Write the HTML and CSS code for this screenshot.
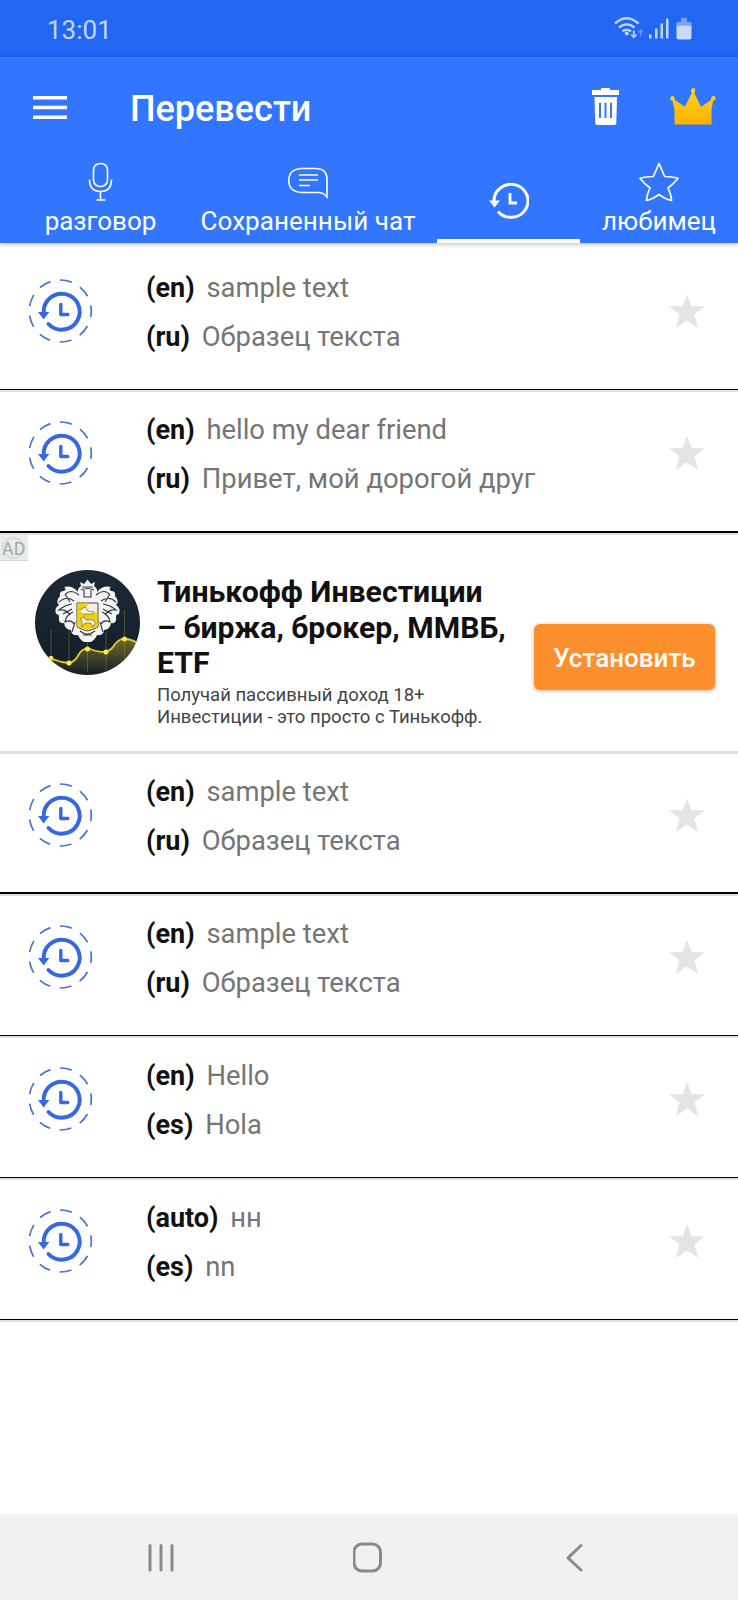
FILE: index.html
```html
<!DOCTYPE html>
<html lang="ru">
<head>
<meta charset="utf-8">
<title>Перевести</title>
<link rel="stylesheet" href="styles.css">
</head>
<body>
<svg class="defs" aria-hidden="true">
  <symbol id="history" viewBox="0 0 70 70">
    <circle cx="35.300" cy="35" r="31" fill="none" stroke="#4a74cc" stroke-width="1.700" stroke-dasharray="12 9.640" stroke-dashoffset="6"/>
    <path d="M18.700 37A18 18 0 1 1 23.500 48" fill="none" stroke="#3568e4" stroke-width="4" stroke-linecap="round"/>
    <path d="M13 36h11.300l-5.600 7.500z" fill="#3568e4"/>
    <path d="M35.800 28.500v10h7" fill="none" stroke="#3568e4" stroke-width="3.400" stroke-linecap="round" stroke-linejoin="round"/>
  </symbol>
  <symbol id="star" viewBox="0 0 36 36">
    <path d="M18 1l4.400 12.300H36L25.600 21.200 29 35 18 27.600 7 35l3.400-13.800L0 13.300h13.600z" fill="#e4e4e4"/>
  </symbol>
</svg>

<div class="status">
  <span class="clock">13:01</span>
  <svg class="status-icons" viewBox="0 0 80 26" width="80" height="26">
    <g fill="none" stroke="#c2d6fb" stroke-width="2.400">
      <path d="M1 7.500q11.500-10.500 23.500 0M5 11.500q7.800-6.500 15.500 0M8.500 15.500q4.300-3.500 8.500 0"/>
      <path d="M19.800 14.500v6.500M17 18.500l2.800 2.800 2.800-2.800" stroke-width="1.700"/>
      <path d="M26.500 20.500v-6M24 16.500l2.500-2.500 2.500 2.500" stroke-width="1.400" opacity=".45"/>
    </g>
    <circle cx="12.700" cy="17.500" r="2" fill="#c2d6fb"/>
    <path d="M35 18.500h2.500v4H35zM41 12.500h2.500v10H41zM46.500 7.500H49v15h-2.500zM52 2.500h2.500v20H52z" fill="#c2d6fb"/>
    <path d="M67 2h6v4h4.500v3.500h-15V6H67z" fill="#7ba1f8"/>
    <path d="M62.500 9.500h15v12q0 2-2 2h-11q-2 0-2-2z" fill="#c8d9fc"/>
  </svg>
</div>

<header class="header">
  <div class="toolbar">
    <svg class="menu" viewBox="0 0 34 23" width="34" height="23"><path d="M0 0h34v3.500H0zM0 9.700h34v3.600H0zM0 19.500h34v3.500H0z" fill="#fff"/></svg>
    <h1 class="title">Перевести</h1>
    <svg class="trash" viewBox="0 0 27 37" width="27" height="37"><path d="M9 0h9v2h9v5H0V2h9zM2.500 9h22.500l-.7 26q0 2-2 2H5.200q-2 0-2-2zM7 14.800v15.200h2V14.800zM12.500 14.800v15.200h2V14.800zM18 14.800v15.200h2V14.800z" fill="#fff" fill-rule="evenodd"/></svg>
    <svg class="crown" viewBox="0 0 46 37" width="46" height="37">
      <defs><linearGradient id="gold" x2="0" y2="1"><stop stop-color="#ffd51a"/><stop offset="1" stop-color="#ffb000"/></linearGradient></defs>
      <path d="M4.500 36.500V22L2.600 13Q0 12.500.2 10.200.5 8 2.700 8 5 8.500 4.800 12L14.800 18.700 21.800 5Q20.500 3.700 21 1.700 22 0 23.300 0q2 .3 2 2.500 0 1.500-1 2.500L31 18.700 41 12q-.2-3.500 2-4Q45.500 8 45.700 10.200 45.600 12.700 43 13L41.500 22V36.500z" fill="url(#gold)"/>
    </svg>
  </div>
  <nav class="tabs">
    <div class="tab talk">
      <svg class="tab-icon" viewBox="0 0 40 40" width="40" height="40" fill="none" stroke="#fff" stroke-width="1.600"><rect x="12.500" y="1.500" width="14" height="23" rx="6.500"/><path d="M8.500 17.500q0 12 11 12t11-12M19.500 29.500v8.500M15.500 38h9"/></svg>
      <span>разговор</span>
    </div>
    <div class="tab chat">
      <svg class="tab-icon" viewBox="0 0 40 40" width="40" height="40" fill="none" stroke="#fff" stroke-width="1.600"><path d="M13 6.500H27Q39 6.500 39 17V35Q35.500 30.500 30 30.500H13Q.7 29.500.7 18.500T13 6.500z"/><path d="M11 13h19M11 18h19M11 23.500h11"/></svg>
      <span>Сохраненный чат</span>
    </div>
    <div class="tab recent active">
      <svg viewBox="0 0 40 36" width="40" height="36"><path d="M5 18.500A17 16.500 0 1 1 9 28.500" fill="none" stroke="#fff" stroke-width="3"/><path d="M0 17.500h11l-5.500 7z" fill="#fff"/><path d="M21 10v10h7" fill="none" stroke="#fff" stroke-width="2.800"/></svg>
    </div>
    <div class="tab fav">
      <svg class="tab-icon" viewBox="0 0 40 40" width="40" height="40" fill="none" stroke="#fff" stroke-width="1.700" stroke-linejoin="round"><path d="M20 1.500Q24.500 12 25.700 14.500 36 15 39 16.500 34 22.500 29 26 32.500 34 32.500 38.500 27 37.500 20 32.500 13 37.500 7.500 38.500 7.500 34 11 26 6 22.500 1 16.500 4 15 14.300 14.500 15.500 12 20 1.500z"/></svg>
      <span>любимец</span>
    </div>
  </nav>
</header>

<main class="list">
  <article class="row">
    <svg class="history"><use href="#history"/></svg>
    <div class="lines"><p><b>(en)</b> sample text</p><p><b>(ru)</b> Образец текста</p></div>
    <svg class="star"><use href="#star"/></svg>
  </article>
  <article class="row thick before-ad">
    <svg class="history"><use href="#history"/></svg>
    <div class="lines"><p><b>(en)</b> hello my dear friend</p><p><b>(ru)</b> Привет, мой дорогой друг</p></div>
    <svg class="star"><use href="#star"/></svg>
  </article>
  <section class="ad">
    <span class="ad-mark">AD</span>
    <svg class="logo" viewBox="0 0 105 105" width="105" height="105">
      <defs>
        <clipPath id="disc"><circle cx="52.500" cy="52.500" r="52.500"/></clipPath>
        <linearGradient id="night" x2="0" y2="1"><stop stop-color="#1e2938"/><stop offset="1" stop-color="#141d27"/></linearGradient>
        <linearGradient id="glow" x2="0" y2="1"><stop stop-color="#8b8226" stop-opacity=".75"/><stop offset="1" stop-color="#8b8226" stop-opacity="0"/></linearGradient>
      </defs>
      <g clip-path="url(#disc)">
        <rect width="105" height="105" fill="url(#night)"/>
        <path d="M16 60v30M34 58v38M52.500 70v32M71 62v38M89.500 40v60" stroke="#4a4f38" stroke-width="1"/>
        <path d="M8 85Q14 90 19 89.500 26 92.500 34 93 40 92 44 84 48 78 54 78.500 64 83 71 81.500 77 80 80 74 86 67 92 69 99 70 105 75V105H8z" fill="url(#glow)"/>
        <path d="M8 85Q14 90 19 89.500 26 92.500 34 93 40 92 44 84 48 78 54 78.500 64 83 71 81.500 77 80 80 74 86 67 92 69 99 70 105 75" fill="none" stroke="#dcc92c" stroke-width="1.800"/>
        <g fill="#ffe84a"><circle cx="16" cy="88" r="2.300"/><circle cx="34" cy="93" r="2.500"/><circle cx="52.500" cy="79" r="2.500"/><circle cx="71" cy="82" r="2.500"/><circle cx="89.500" cy="69" r="2.500"/></g>
        <path d="M45 12l4 2 3.500-4.500L56 14l4-2-1 4q4 3 3 6 6-7 14-5-3 2 0 4 5 0 4 5 5 6 1 9 5 3 3 9-3 0-3 3 1 7-5 6-1 7-7 7 0 6-7 5-2 5-6 7H49q-4-2-6-7-7 1-7-5-6 0-7-7-6 1-5-6 0-3-3-3-2-6 3-9-4-3 1-9-1-5 4-5 3-2 0-4 8-2 14 5-1-3 3-6z" fill="#f3f3f1"/>
        <g fill="none" stroke="#303740" stroke-width="1.100"><path d="M47 17h11M46 20q7-3 13 0M49 20v7h7v-7M44 25q-9-7-14 0M61 25q9-7 14 0M39 31q-7-6-15 1M66 31q8-6 15 1M37 34q-7 1-13 6 7-1 11 5M68 34q7 1 13 6-7-1-11 5M38 42q-7 3-8 10 6-3 9 2M67 42q7 3 8 10-6-3-9 2M40 52l-3 10M65 52l3 10M45 61q7 6 15 0M48 65h9M30 24l5 8M75 24l-5 8M28 44l9-5M77 44l-9-5"/></g>
        <path d="M42 33h21v24q-6 3-10.500 4Q48 60 42 57z" fill="#f4f1df" stroke="#4d4a2b"/>
        <path d="M42.500 33.500h10.500l-2 5 4 4h7.500v14.500l-10 3-10-3z" fill="#ecd116"/>
        <path d="M45 40l5-3 3 4 6 1-1 2H48M45 49l4-2 2 3h7l2 3-2 4-2-4h-6l-3 4v-6z" fill="#fbf8e8" stroke="#5b531b" stroke-width=".6"/>
      </g>
    </svg>
    <div class="ad-copy">
      <h2>Тинькофф Инвестиции<br>– биржа, брокер, ММВБ,<br>ETF</h2>
      <p>Получай пассивный доход 18+<br>Инвестиции - это просто с Тинькофф.</p>
    </div>
    <button class="install">Установить</button>
  </section>
  <article class="row thick">
    <svg class="history"><use href="#history"/></svg>
    <div class="lines"><p><b>(en)</b> sample text</p><p><b>(ru)</b> Образец текста</p></div>
    <svg class="star"><use href="#star"/></svg>
  </article>
  <article class="row">
    <svg class="history"><use href="#history"/></svg>
    <div class="lines"><p><b>(en)</b> sample text</p><p><b>(ru)</b> Образец текста</p></div>
    <svg class="star"><use href="#star"/></svg>
  </article>
  <article class="row">
    <svg class="history"><use href="#history"/></svg>
    <div class="lines"><p><b>(en)</b> Hello</p><p><b>(es)</b> Hola</p></div>
    <svg class="star"><use href="#star"/></svg>
  </article>
  <article class="row">
    <svg class="history"><use href="#history"/></svg>
    <div class="lines"><p><b>(auto)</b> нн</p><p><b>(es)</b> nn</p></div>
    <svg class="star"><use href="#star"/></svg>
  </article>
</main>

<footer class="navbar">
  <svg viewBox="0 0 28 40" width="28" height="40" fill="none" stroke="#8a8a8a" stroke-width="3" stroke-linecap="round"><path d="M3 8.500v24.500M14 8.500v24.500M25 8.500v24.500"/></svg>
  <svg viewBox="0 0 30 40" width="30" height="40" fill="none" stroke="#8a8a8a" stroke-width="3"><rect x="1" y="7" width="26.500" height="27" rx="8"/></svg>
  <svg viewBox="0 0 18 40" width="18" height="40" fill="none" stroke="#8a8a8a" stroke-width="3" stroke-linecap="round" stroke-linejoin="round"><path d="M15 8.500L2 20.800l13 12.200"/></svg>
</footer>
</body>
</html>
```
FILE: styles.css
```css
* { box-sizing: border-box; }
body {
  margin: 0;
  width: 738px;
  height: 1600px;
  display: flex;
  flex-direction: column;
  background: #fff;
  font-family: Roboto, "Noto Sans", sans-serif;
  overflow: hidden;
}
h1, h2, p { margin: 0; }
svg { display: block; flex: none; }
.defs { width: 0; height: 0; position: absolute; }

.status {
  height: 57px;
  flex: none;
  display: flex;
  justify-content: space-between;
  align-items: center;
  padding: 0 44px 0 47px;
  background: #2267f2;
}
.clock { color: #c2d6fb; font-size: 26px; line-height: 30px; letter-spacing: 0; padding-top: 2px; }

.header {
  height: 186px;
  flex: none;
  display: flex;
  flex-direction: column;
  background: #3276ff;
  color: #fff;
  box-shadow: 0 1px 5px rgba(0, 0, 0, .28);
}
.toolbar { height: 100px; display: flex; align-items: center; padding: 0 22px 0 33px; }
.title { flex: 1; margin-left: 63px; font-size: 36px; line-height: 42px; font-weight: 500; padding-top: 3px; }
.trash, .crown { margin-bottom: 2px; }
.crown { margin-left: 51px; }
.tabs { height: 86px; display: flex; }
.tab { display: flex; flex-direction: column; align-items: center; white-space: nowrap; font-size: 26px; line-height: 30px; }
.tab-icon { margin: 5px 0 4px; }
.talk { width: 181px; padding-left: 20px; }
.chat { width: 256px; padding-right: 2px; letter-spacing: .05px; }
.recent { width: 143px; padding-top: 26px; border-bottom: 4px solid #fff; }
.fav { width: 158px; }

.list { flex: 1; padding-top: 7px; }
.row {
  height: 142px;
  display: flex;
  border-bottom: 2px solid #e0e0e0;
  box-shadow: inset 0 -1px #000;
}
.row.thick { box-shadow: inset 0 -2px #000; }
.row.before-ad { height: 143px; }
.history { width: 70px; height: 70px; margin: 26px 51px 0 25px; }
.lines { flex: 1; padding-top: 14px; }
.lines p { height: 49px; line-height: 49px; font-size: 27.400px; color: #757575; white-space: nowrap; }
.lines b { font-size: 27px; font-weight: 700; color: #111; margin-right: 5px; }
.star { width: 36px; height: 36px; margin: 43px 33px 0 0; }

.ad { height: 219px; display: flex; position: relative; border-bottom: 3px solid #e0e0e0; padding-left: 35px; }
.ad-mark {
  position: absolute;
  left: 0;
  top: 0;
  width: 28px;
  height: 26px;
  background: radial-gradient(circle at 13px 13px, #ececec 8px, #d3e3e3 9px, #d3e3e3 11px, #ececec 12px);
  border-bottom: 1px solid #ddd0d0;
  color: #aaa;
  font-size: 18px;
  line-height: 28px;
  padding-left: 2px;
}
.logo { margin-top: 35px; }
.ad-copy { width: 377px; padding: 39px 0 0 17px; white-space: nowrap; }
.ad-copy h2 { font-size: 30.200px; line-height: 35.500px; font-weight: 700; color: #131011; }
.ad-copy p { font-size: 18.500px; line-height: 22px; color: #444; margin-top: 3px; }
.install {
  width: 181px;
  height: 66px;
  margin-top: 89px;
  padding: 2px 0 0;
  margin-left: 17px;
  border: 0;
  border-radius: 6px;
  background: #ff8f2c;
  color: #fff;
  font: 500 26px/64px Roboto, "Noto Sans", sans-serif;
  box-shadow: 0 1px 4px rgba(0, 0, 0, .3);
}

.navbar { height: 86px; flex: none; display: flex; align-items: center; background: #f1f1f1; padding-left: 147px; }
.navbar svg + svg { margin-left: 178px; }
.navbar svg:last-child { margin-left: 183px; }
```
